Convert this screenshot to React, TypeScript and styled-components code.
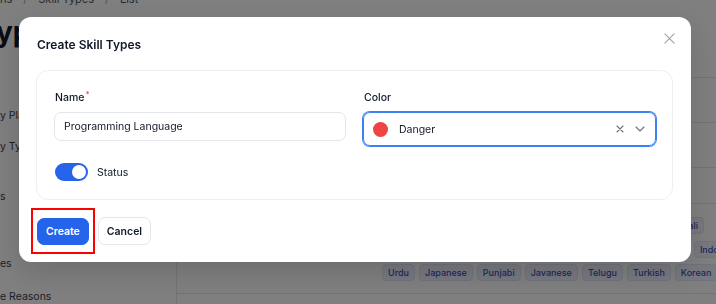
import styled, { createGlobalStyle } from 'styled-components';

const GlobalStyle = createGlobalStyle`
  html, body { margin: 0; padding: 0; }
  body {
    width: 716px;
    height: 304px;
    overflow: hidden;
    background: #ffffff;
    font-family: 'Inter', 'Noto Sans', Arial, sans-serif;
    color: #111827;
  }
`;

const Page = styled.div`
  width: 716px;
  height: 304px;
  overflow: hidden;
  background: #ffffff;
`;

const Breadcrumb = styled.div`
  display: flex;
  align-items: center;
  gap: 11px;
  height: 12px;
  margin-top: -7px;
  font-size: 11px;
  color: #4b5563;
  white-space: nowrap;
`;

const Crumb = styled.span<{ $sep?: boolean }>`
  color: ${({ $sep }) => ($sep ? '#9ca3af' : '#4b5563')};
`;

const Heading = styled.h1`
  margin: 10px 0 0 -4px;
  font-size: 28px;
  line-height: 34px;
  font-weight: 700;
  color: #111827;
`;

const Body = styled.div`
  display: grid;
  grid-template-columns: 176px 1fr;
  margin-top: 28px;
`;

const SubNav = styled.nav`
  display: flex;
  flex-direction: column;
`;

const NavItem = styled.div<{ $space: number }>`
  height: 16px;
  margin-top: ${({ $space }) => $space}px;
  font-size: 10.5px;
  line-height: 16px;
  color: #374151;
  white-space: nowrap;
`;

const TableCard = styled.div`
  border-left: 1px solid #e5e7eb;
  border-top: 1px solid #e5e7eb;
  display: flex;
  flex-direction: column;
  min-width: 560px;
`;

const Row = styled.div<{ $h: number }>`
  height: ${({ $h }) => $h}px;
  border-bottom: 1px solid #e5e7eb;
  box-sizing: border-box;
`;

const TagRow = styled.div`
  display: grid;
  grid-template-columns: 205px 1fr;
  height: 90px;
  border-bottom: 1px solid #e5e7eb;
  box-sizing: border-box;
  padding-top: 13px;
`;

const TagLines = styled.div`
  display: flex;
  flex-direction: column;
  gap: 6.5px;
`;

const TagLine = styled.div`
  display: flex;
  gap: 4px;
  white-space: nowrap;
`;

const Tag = styled.span`
  display: inline-flex;
  align-items: center;
  height: 17px;
  padding: 0 5px;
  border-radius: 4px;
  background: #eef2ff;
  border: 1px solid #e0e7ff;
  color: #3f4fb5;
  font-size: 9px;
  font-weight: 500;
  box-sizing: border-box;
`;

const Overlay = styled.div`
  position: fixed;
  inset: 0;
  background: rgba(0, 0, 0, 0.5);
`;

const Modal = styled.div`
  position: fixed;
  left: 19px;
  top: 17px;
  width: 672px;
  box-sizing: border-box;
  background: #ffffff;
  border-radius: 12px;
  padding: 18px 18px 17px 17px;
  box-shadow: 0 10px 30px rgba(0, 0, 0, 0.15);
`;

const ModalHeader = styled.div`
  display: flex;
  align-items: center;
  justify-content: space-between;
  height: 18px;
  padding-left: 1px;
`;

const Title = styled.h2`
  margin: 0;
  font-size: 12px;
  font-weight: 600;
  color: #111827;
`;

const CloseBtn = styled.button`
  border: none;
  background: none;
  padding: 0;
  margin-top: -12px;
  margin-right: -3px;
  width: 14px;
  height: 14px;
  display: flex;
  align-items: center;
  justify-content: center;
  color: #9ca3af;
`;

const FormCard = styled.div`
  margin-top: 17px;
  border: 1px solid #eeeff1;
  border-radius: 12px;
  padding: 20px 16px 18px 17px;
  display: grid;
  gap: 17px;
`;

const FieldGrid = styled.div`
  display: grid;
  grid-template-columns: 292px 293px;
  gap: 17px;
`;

const Field = styled.div`
  display: flex;
  flex-direction: column;
  gap: 7px;
`;

const Label = styled.label`
  position: relative;
  font-size: 10.5px;
  font-weight: 500;
  color: #111827;
  line-height: 14px;
  padding-left: 1px;
`;

const Req = styled.span`
  position: relative;
  top: -4px;
  color: #ef4444;
  font-size: 8px;
  line-height: 0;
  margin-left: 1px;
`;

const TextInput = styled.input`
  height: 29px;
  box-sizing: border-box;
  border: 1px solid #e5e7eb;
  border-radius: 7px;
  padding: 0 9px;
  font-family: inherit;
  font-size: 10.5px;
  color: #111827;
  outline: none;
`;

const SelectBox = styled.div`
  height: 34px;
  box-sizing: border-box;
  border: 1px solid #3b82f6;
  box-shadow: 0 0 0 1px #3b82f6;
  border-radius: 7px;
  display: flex;
  align-items: center;
  padding: 0 10px 0 9px;
  gap: 10px;
`;

const Dot = styled.span<{ $color: string }>`
  width: 15px;
  height: 15px;
  border-radius: 50%;
  background: ${({ $color }) => $color};
  flex-shrink: 0;
`;

const SelectValue = styled.span`
  flex: 1;
  font-size: 10.5px;
  color: #111827;
  margin-left: 1px;
`;

const SelectIcons = styled.div`
  display: flex;
  align-items: center;
  gap: 11px;
  color: #6b7280;
`;

const ToggleRow = styled.div`
  display: flex;
  align-items: center;
  gap: 9px;
  padding-left: 1px;
`;

const Switch = styled.span<{ $on: boolean }>`
  position: relative;
  width: 33px;
  height: 18px;
  border-radius: 999px;
  background: ${({ $on }) => ($on ? '#2563eb' : '#e5e7eb')};
  &::after {
    content: '';
    position: absolute;
    top: 2px;
    left: ${({ $on }) => ($on ? '17px' : '2px')};
    width: 14px;
    height: 14px;
    border-radius: 50%;
    background: #ffffff;
  }
`;

const SwitchLabel = styled.span`
  font-size: 10.5px;
  color: #111827;
`;

const Footer = styled.div`
  display: flex;
  align-items: center;
  gap: 9px;
  margin-top: 17px;
  padding-left: 1px;
`;

const Highlight = styled.span`
  position: relative;
  display: inline-flex;
  &::after {
    content: '';
    position: absolute;
    left: -6px;
    right: -6px;
    top: -10px;
    bottom: -9px;
    border: 2px solid #ff0000;
  }
`;

const Button = styled.button<{ $primary?: boolean }>`
  height: ${({ $primary }) => ($primary ? '27px' : '28px')};
  padding: 0 8px;
  border-radius: 7px;
  font-family: inherit;
  font-size: 10.5px;
  font-weight: 600;
  border: 1px solid ${({ $primary }) => ($primary ? '#2563eb' : '#e5e7eb')};
  background: ${({ $primary }) => ($primary ? '#2563eb' : '#ffffff')};
  color: ${({ $primary }) => ($primary ? '#ffffff' : '#111827')};
`;

const navItems = [
  { label: 'y Plans', space: 31 },
  { label: 'y Types', space: 15 },
  { label: 's', space: 34 },
  { label: 'es', space: 51 },
  { label: 'e Reasons', space: 17 },
];

const tagLines = [
  ['English', 'Mandarin', 'Hindi', 'Spanish', 'Dutch', 'Arabic', 'Bengali'],
  ['Portuguese', 'German', 'Greek', 'Vietnamese', 'Marathi', 'Tamil', 'Indonesian'],
  ['Urdu', 'Japanese', 'Punjabi', 'Javanese', 'Telugu', 'Turkish', 'Korean'],
];

const App = () => {
  return (
    <>
      <GlobalStyle />
      <Page>
        <Breadcrumb>
          <Crumb>ns</Crumb>
          <Crumb $sep>/</Crumb>
          <Crumb>Skill Types</Crumb>
          <Crumb $sep>/</Crumb>
          <Crumb>List</Crumb>
        </Breadcrumb>
        <Heading>ypes</Heading>
        <Body>
          <SubNav>
            {navItems.map((n) => (
              <NavItem key={n.label} $space={n.space}>{n.label}</NavItem>
            ))}
          </SubNav>
          <TableCard>
            <Row $h={45} />
            <Row $h={45} />
            <Row $h={36} />
            <TagRow>
              <div />
              <TagLines>
                {tagLines.map((line, i) => (
                  <TagLine key={i}>
                    {line.map((t) => <Tag key={t}>{t}</Tag>)}
                  </TagLine>
                ))}
              </TagLines>
            </TagRow>
            <Row $h={40} />
          </TableCard>
        </Body>
      </Page>

      <Overlay />
      <Modal>
        <ModalHeader>
          <Title>Create Skill Types</Title>
          <CloseBtn aria-label="Close">
            <svg width="11" height="11" viewBox="0 0 12 12" fill="none" stroke="currentColor" strokeWidth="1.2" strokeLinecap="round">
              <path d="M1 1l10 10M11 1L1 11" />
            </svg>
          </CloseBtn>
        </ModalHeader>

        <FormCard>
          <FieldGrid>
            <Field>
              <Label>Name<Req>*</Req></Label>
              <TextInput defaultValue="Programming Language" />
            </Field>
            <Field>
              <Label>Color</Label>
              <SelectBox>
                <Dot $color="#ef4444" />
                <SelectValue>Danger</SelectValue>
                <SelectIcons>
                  <svg width="8" height="8" viewBox="0 0 8 8" fill="none" stroke="currentColor" strokeWidth="1.1" strokeLinecap="round">
                    <path d="M1 1l6 6M7 1L1 7" />
                  </svg>
                  <svg width="10" height="6" viewBox="0 0 10 6" fill="none" stroke="currentColor" strokeWidth="1.1" strokeLinecap="round" strokeLinejoin="round">
                    <path d="M1 1l4 4 4-4" />
                  </svg>
                </SelectIcons>
              </SelectBox>
            </Field>
          </FieldGrid>
          <ToggleRow>
            <Switch $on />
            <SwitchLabel>Status</SwitchLabel>
          </ToggleRow>
        </FormCard>

        <Footer>
          <Highlight>
            <Button $primary>Create</Button>
          </Highlight>
          <Button>Cancel</Button>
        </Footer>
      </Modal>
    </>
  );
};

export default App;
